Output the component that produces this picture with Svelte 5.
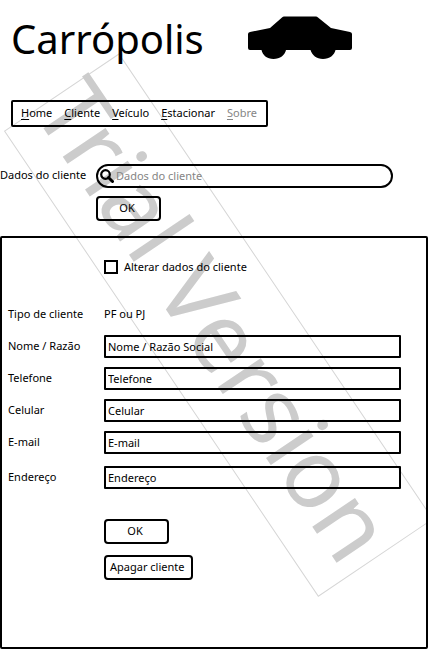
<script>
  const menu = [
    { label: 'Home' },
    { label: 'Cliente' },
    { label: 'Veículo' },
    { label: 'Estacionar' },
    { label: 'Sobre', muted: true }
  ];

  let search = $state('');
  let editing = $state(false);
  let fields = $state([
    { id: 'nome', label: 'Nome / Razão', value: 'Nome / Razão Social' },
    { id: 'telefone', label: 'Telefone', value: 'Telefone' },
    { id: 'celular', label: 'Celular', value: 'Celular' },
    { id: 'email', label: 'E-mail', value: 'E-mail' },
    { id: 'endereco', label: 'Endereço', value: 'Endereço' }
  ]);
</script>

<div class="page">
  <svg class="watermark" width="440" height="610" viewBox="0 0 440 610">
    <g transform="translate(119 54) rotate(56)">
      <rect width="561" height="138" fill="none" stroke="#d6d6d6" />
      <text x="-3" y="104" font-size="96" fill="#ccc">Trial Version</text>
    </g>
  </svg>

  <header>
    <h1>Carrópolis</h1>
    <svg class="car" width="104" height="44" viewBox="0 0 104 44" aria-hidden="true">
      <path d="M36 0.5h32q1 0 2 1L83 12l19 4q2 .5 2 2v14q0 2-2 2H87.500c-1 5-6 9-12.500 9s-11-4-12.500-9H38c-1 5-6 9-12.500 9s-11-4-12-9H2q-2 0-2-2V18q0-1.500 2-2l20-4L34 1.500q1-1 2-1z" />
    </svg>
  </header>

  <nav>
    {#each menu as item}
      <a href="#{item.label.toLowerCase()}" class:muted={item.muted}><u>{item.label[0]}</u>{item.label.slice(1)}</a>
    {/each}
  </nav>

  <form class="search">
    <label for="search">Dados do cliente</label>
    <div class="search-box">
      <svg width="14" height="14" viewBox="0 0 14 14" aria-hidden="true">
        <circle cx="5.500" cy="5.500" r="4.300" fill="none" stroke="#000" stroke-width="2.200" />
        <path d="M8.500 8.500l4 4" stroke="#000" stroke-width="3" stroke-linecap="round" />
      </svg>
      <input id="search" type="text" placeholder="Dados do cliente" bind:value={search} />
    </div>
    <button type="button" class="ok">OK</button>
  </form>

  <form class="panel">
    <div class="check">
      <input id="alterar" type="checkbox" bind:checked={editing} />
      <label for="alterar">Alterar dados do cliente</label>
    </div>
    <div class="row kind">
      <span>Tipo de cliente</span>
      <span>PF ou PJ</span>
    </div>
    {#each fields as field}
      <div class="row">
        <label for={field.id}>{field.label}</label>
        <input id={field.id} type="text" bind:value={field.value} />
      </div>
    {/each}
    <div class="actions">
      <button type="button" class="ok">OK</button>
      <button type="button" class="delete">Apagar cliente</button>
    </div>
  </form>
</div>

<style>
  :global(body) {
    margin: 0;
    background: #fff;
  }

  .page {
    position: relative;
    z-index: 0;
    display: flex;
    flex-direction: column;
    box-sizing: border-box;
    min-height: 100vh;
    overflow: hidden;
    color: #000;
    font: 11px/16px 'Noto Sans', 'Open Sans', sans-serif;
  }

  .page * {
    box-sizing: border-box;
  }

  .watermark {
    position: absolute;
    z-index: -1;
    top: 0;
    left: 0;
    font-family: 'Noto Sans', 'Open Sans', sans-serif;
    pointer-events: none;
  }

  header {
    display: flex;
    align-items: flex-start;
    gap: 45px;
    height: 100px;
    padding: 11px 0 0 11px;
  }

  h1 {
    width: 192px;
    margin: 0;
    font-size: 40px;
    font-weight: 400;
    line-height: 56px;
    white-space: nowrap;
  }

  .car {
    margin-top: 5px;
  }

  nav {
    display: flex;
    align-items: center;
    align-self: flex-start;
    gap: 12px;
    height: 27px;
    margin-left: 11px;
    padding: 0 9px 2px 8px;
    border: 2px solid #000;
    border-radius: 2px;
  }

  a {
    color: #000;
    text-decoration: none;
  }

  a.muted {
    color: #858585;
  }

  u {
    text-underline-offset: 2px;
  }

  .search {
    display: grid;
    grid-template-columns: 96px 1fr;
    row-gap: 8px;
    margin-top: 37px;
    padding-right: 35px;
  }

  .search label {
    padding-top: 3px;
  }

  .search-box {
    display: flex;
    align-items: center;
    gap: 2px;
    height: 24px;
    padding: 0 12px 0 2px;
    border: 2px solid #000;
    border-radius: 12px;
  }

  input {
    min-width: 0;
    margin: 0;
    color: #000;
    background: transparent;
    font: inherit;
  }

  .search-box input {
    flex: 1;
    padding: 0;
    border: 0;
    outline: 0;
  }

  input::placeholder {
    color: #858585;
    opacity: 1;
  }

  button {
    height: 25px;
    padding: 0 4px 2px;
    color: #000;
    background: transparent;
    border: 2px solid #000;
    border-radius: 4px;
    font: inherit;
  }

  .ok {
    width: 65px;
    padding-right: 7px;
  }

  .search .ok {
    grid-column: 2;
  }

  .panel {
    display: flex;
    flex: 1;
    flex-direction: column;
    gap: 9px;
    margin-top: 15px;
    padding: 21px 25px 16px 6px;
    border: 2px solid #000;
    border-radius: 2px;
  }

  .check {
    display: flex;
    align-items: center;
    gap: 6px;
    height: 16px;
    margin: 0 0 19px 96px;
  }

  .check input {
    appearance: none;
    width: 14px;
    height: 14px;
    border: 2px solid #000;
  }

  .check input:checked {
    background: #000;
    box-shadow: inset 0 0 0 2px #fff;
  }

  .row {
    display: grid;
    grid-template-columns: 96px 1fr;
    height: 23px;
    line-height: 22px;
  }

  .row input {
    width: 100%;
    height: 23px;
    padding: 0 2px 1px;
    border: 2px solid #000;
    border-radius: 1px;
    line-height: 18px;
  }

  .row:nth-last-child(2) {
    margin-top: 3px;
  }

  .actions {
    display: flex;
    flex-direction: column;
    align-items: flex-start;
    gap: 11px;
    margin: 21px 0 0 96px;
  }

  .delete {
    width: 89px;
    padding-right: 7px;
    white-space: nowrap;
  }
</style>
